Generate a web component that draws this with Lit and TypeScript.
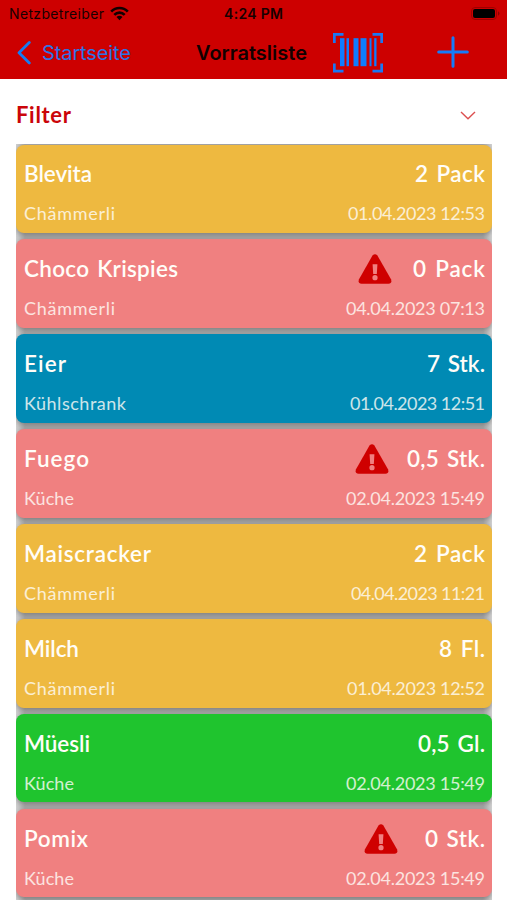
import { LitElement, html, css, svg, nothing } from "lit";
import { customElement, property } from "lit/decorators.js";
import { classMap } from "lit/directives/class-map.js";
import { styleMap } from "lit/directives/style-map.js";

type Tone = "amber" | "coral" | "blue" | "green";

interface Item {
  name: string;
  nameWidth: number;
  place: string;
  placeWidth: number;
  amount: string;
  amountWidth: number;
  date: string;
  dateWidth: number;
  tone: Tone;
  /** Distance between the warning sign and the amount; set only for low stock. */
  warnGap?: number;
}

const ITEMS: Item[] = [
  { name: "Blevita", nameWidth: 68, place: "Chämmerli", placeWidth: 91, amount: "2 Pack", amountWidth: 70, date: "01.04.2023 12:53", dateWidth: 137, tone: "amber" },
  { name: "Choco Krispies", nameWidth: 154, place: "Chämmerli", placeWidth: 91, amount: "0 Pack", amountWidth: 72, date: "04.04.2023 07:13", dateWidth: 139, tone: "coral", warnGap: 21 },
  { name: "Eier", nameWidth: 42, place: "Kühlschrank", placeWidth: 102, amount: "7 Stk.", amountWidth: 58, date: "01.04.2023 12:51", dateWidth: 135, tone: "blue" },
  { name: "Fuego", nameWidth: 65, place: "Küche", placeWidth: 50, amount: "0,5 Stk.", amountWidth: 78, date: "02.04.2023 15:49", dateWidth: 139, tone: "coral", warnGap: 18 },
  { name: "Maiscracker", nameWidth: 127, place: "Chämmerli", placeWidth: 91, amount: "2 Pack", amountWidth: 71, date: "04.04.2023 11:21", dateWidth: 134, tone: "amber" },
  { name: "Milch", nameWidth: 55, place: "Chämmerli", placeWidth: 91, amount: "8 Fl.", amountWidth: 46, date: "01.04.2023 12:52", dateWidth: 138, tone: "amber" },
  { name: "Müesli", nameWidth: 66, place: "Küche", placeWidth: 50, amount: "0,5 Gl.", amountWidth: 67, date: "02.04.2023 15:49", dateWidth: 139, tone: "green" },
  { name: "Pomix", nameWidth: 64, place: "Küche", placeWidth: 50, amount: "0 Stk.", amountWidth: 60, date: "02.04.2023 15:49", dateWidth: 139, tone: "coral", warnGap: 27 },
];

/** Single-line label tracked so that its text spans the given width. */
@customElement("tracked-label")
export class TrackedLabel extends LitElement {
  @property() text = "";
  @property({ type: Number }) span = 0;

  static styles = css`
    :host { display: block; white-space: pre; }
    .t { display: inline-block; }
  `;

  updated() {
    const el = this.renderRoot.querySelector<HTMLElement>(".t");
    if (!el) return;
    el.style.letterSpacing = "0px";
    const natural = el.getBoundingClientRect().width;
    const step = (this.span - natural) / Math.max(1, this.text.length - 1);
    el.style.letterSpacing = `${step}px`;
    el.style.marginRight = `${-step}px`;
  }

  render() {
    return html`<span class="t">${this.text}</span>`;
  }
}

@customElement("status-bar")
export class StatusBar extends LitElement {
  static styles = css`
    :host {
      display: grid;
      grid-template-columns: 215px auto 1fr;
      align-items: center;
      height: 27px;
      padding: 0 7px 0 9px;
      color: #180000;
      font: 400 14px/27px Inter, "Liberation Sans", sans-serif;
    }
    .left { display: flex; align-items: center; gap: 6px; }
    .time { font-weight: 600; font-size: 14px; }
    .right { display: flex; justify-content: flex-end; }
    svg { display: block; }
  `;

  render() {
    return html`
      <div class="left">
        <tracked-label text="Netzbetreiber" span="95"></tracked-label>
        <svg width="19" height="15" viewBox="0 0 19 15" fill="none" stroke="#120000" stroke-width="2.6">
          <path d="M1.2 5.6C5.8 .7 13.2 .7 17.8 5.6" />
          <path d="M4.3 8.8C7.2 5.9 11.8 5.9 14.7 8.8" />
          <path d="M6.5 11.1C8.2 9.4 10.8 9.4 12.5 11.1L9.5 14.2Z" fill="#120000" stroke="none" />
        </svg>
      </div>
      <tracked-label class="time" text="4:24 PM" span="59"></tracked-label>
      <div class="right">
        <svg width="29" height="13" viewBox="0 0 29 13">
          <rect x=".5" y=".5" width="25" height="12" rx="3.5" fill="none" stroke="#9e0000" />
          <rect x="2" y="2" width="22" height="9" rx="2" fill="#000" />
          <path d="M27 4.2Q28.5 5 28.5 6.5T27 8.8Z" fill="#8c0000" />
        </svg>
      </div>
    `;
  }
}

@customElement("nav-bar")
export class NavBar extends LitElement {
  static styles = css`
    :host {
      display: flex;
      align-items: center;
      height: 52px;
      font: 400 20px/28px Inter, "Liberation Sans", sans-serif;
    }
    svg { display: block; flex: none; }
    .back { display: flex; align-items: center; gap: 11px; width: 179px; padding-left: 17px; color: #2d73e6; }
    .title { width: 111px; color: #120000; font-weight: 600; }
    .scan { margin-left: 26px; }
    .add { margin-left: 54px; margin-top: -2px; }
  `;

  render() {
    const bars: [number, number][] = [[7, 4.5], [13.5, 2.5], [20.5, 5], [27.5, 6], [36.5, 2], [41.2, 2.3]];
    return html`
      <div class="back">
        <svg width="14" height="24" viewBox="0 0 14 24" fill="none" stroke="#147cf2" stroke-width="2.8" stroke-linecap="round" stroke-linejoin="round">
          <path d="M12.3 1.5L2 11.7L12.3 22" />
        </svg>
        <tracked-label text="Startseite" span="89"></tracked-label>
      </div>
      <tracked-label class="title" text="Vorratsliste" span="111"></tracked-label>
      <svg class="scan" width="50" height="40" viewBox="0 0 50 40">
        <path d="M1.3 9V.3H10.5M39.5 .3H48.7V9M48.7 29.5V37.2H39.5M10.5 37.2H1.3V29.5" transform="translate(0 1)" fill="none" stroke="#1b78f4" stroke-width="2.8" />
        ${bars.map(([x, w]) => svg`<rect x=${x} y="5.2" width=${w} height="28" fill="#0f7dff" />`)}
      </svg>
      <svg class="add" width="32" height="32" viewBox="0 0 32 32" stroke="#147cfa" stroke-width="3" stroke-linecap="round">
        <path d="M1.7 16H30.3M16 1.7V30.3" />
      </svg>
    `;
  }
}

@customElement("stock-card")
export class StockCard extends LitElement {
  @property({ attribute: false }) item!: Item;

  static styles = css`
    :host { display: block; }
    .card {
      box-sizing: border-box;
      height: 88.6px;
      padding: 14.9px 7px 0 8px;
      border-radius: 8px;
      color: #fffdf8;
      font-family: Lato, "Open Sans", sans-serif;
      box-shadow: 0 2px 5px rgba(90, 90, 90, 0.5);
    }
    .amber { background: #eeb940; }
    .coral { background: #f08080; }
    .blue { background: #008ab4; }
    .green { background: #1fc42e; }
    .row { display: flex; justify-content: space-between; align-items: center; }
    .main { height: 30px; font-size: 22.5px; line-height: 30px; font-weight: 600; word-spacing: 2px; }
    .sub { height: 24px; margin-top: 11.9px; font-size: 18px; line-height: 24px; font-weight: 400; opacity: 0.8; }
    .amount { display: flex; align-items: center; }
    svg { display: block; }
  `;

  render() {
    const i = this.item;
    return html`
      <div class=${classMap({ card: true, [i.tone]: true })}>
        <div class="row main">
          <tracked-label .text=${i.name} .span=${i.nameWidth}></tracked-label>
          <div class="amount" style=${styleMap({ gap: `${i.warnGap ?? 0}px` })}>
            ${i.warnGap
              ? html`<svg width="34" height="30" viewBox="0 0 34 30">
                  <path d="M14.5 1.5Q17 -1.2 19.4 1.5L33 25.2Q34.4 29.5 30.5 29.7H3.5Q-.4 29.5 1 25.2Z" fill="#cf0000" />
                  <path d="M14.6 10.3H19.4L18.8 20H15.2Z" fill="#f08080" />
                  <circle cx="17" cy="23.7" r="2.6" fill="#f08080" />
                </svg>`
              : nothing}
            <tracked-label .text=${i.amount} .span=${i.amountWidth}></tracked-label>
          </div>
        </div>
        <div class="row sub">
          <tracked-label .text=${i.place} .span=${i.placeWidth}></tracked-label>
          <tracked-label .text=${i.date} .span=${i.dateWidth}></tracked-label>
        </div>
      </div>
    `;
  }
}

@customElement("app-root")
export class AppRoot extends LitElement {
  static styles = css`
    :host { display: block; height: 900px; overflow: hidden; background: #fff; }
    .top { background: #cd0000; }
    .filter {
      display: flex;
      align-items: center;
      justify-content: space-between;
      height: 65px;
      padding: 7px 31px 0 16px;
      box-sizing: border-box;
      color: #cb0509;
      font: 700 22px/30px Lato, "Open Sans", sans-serif;
    }
    .list {
      display: flex;
      flex-direction: column;
      gap: 6.3px;
      margin: 0 15px 0 16px;
      padding: 0.5px 0 20px;
      overflow: hidden;
      background: linear-gradient(90deg, #d2d2d2, #a8a8a8 9px, #a8a8a8 calc(100% - 9px), #d2d2d2);
    }
    svg { display: block; }
  `;

  render() {
    return html`
      <header class="top">
        <status-bar></status-bar>
        <nav-bar></nav-bar>
      </header>
      <div class="filter">
        <tracked-label text="Filter" span="55"></tracked-label>
        <svg width="16" height="9" viewBox="0 0 16 9" fill="none" stroke="#dc5050" stroke-width="1.4">
          <path d="M1 1L8 7.8L15 1" />
        </svg>
      </div>
      <main class="list">
        ${ITEMS.map((item) => html`<stock-card .item=${item}></stock-card>`)}
      </main>
    `;
  }
}
